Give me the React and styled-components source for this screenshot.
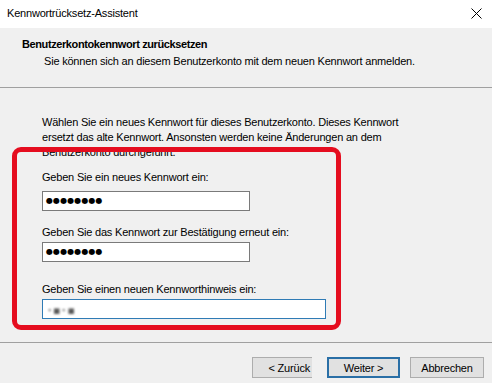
import styled, { createGlobalStyle } from 'styled-components';

const GlobalStyle = createGlobalStyle`
  html, body {
    margin: 0;
    padding: 0;
    background: #f0f0f0;
  }
  body {
    font-family: 'Liberation Sans', Arial, sans-serif;
    font-size: 11px;
    letter-spacing: -0.2px;
    color: #000;
  }
`;

const fields = [
  { label: 'Geben Sie ein neues Kennwort ein:', value: '●●●●●●●●', width: 208, top: 10, gap: 6 },
  { label: 'Geben Sie das Kennwort zur Bestätigung erneut ein:', value: '●●●●●●●●', width: 208, top: 14, gap: 2 },
  { label: 'Geben Sie einen neuen Kennworthinweis ein:', hint: true, width: 284, top: 20, gap: 2, focused: true },
];

const App = () => (
  <>
    <GlobalStyle />
    <Window>
      <TitleBar>
        <TitleText>Kennwortrücksetz-Assistent</TitleText>
        <CloseButton title='Schließen'>
          <svg width='11' height='11' viewBox='0 0 11 11'>
            <path d='M0.5 0.5 L10.5 10.5 M10.5 0.5 L0.5 10.5' stroke='#000' strokeWidth='1' fill='none' />
          </svg>
        </CloseButton>
      </TitleBar>
      <Header>
        <HeaderTitle>Benutzerkontokennwort zurücksetzen</HeaderTitle>
        <HeaderSubtitle>Sie können sich an diesem Benutzerkonto mit dem neuen Kennwort anmelden.</HeaderSubtitle>
      </Header>
      <Body>
        <Intro>
          Wählen Sie ein neues Kennwort für dieses Benutzerkonto. Dieses Kennwort<br />
          ersetzt das alte Kennwort. Ansonsten werden keine Änderungen an dem<br />
          Benutzerkonto durchgeführt.
        </Intro>
        {fields.map(f => (
          <Field key={f.label} top={f.top}>
            <FieldLabel gap={f.gap}>{f.label}</FieldLabel>
            <TextBox width={f.width} focused={f.focused}>
              {f.hint ? <BlurredHint>ꞏ▪ꞏ▪</BlurredHint> : <Dots>{f.value}</Dots>}
            </TextBox>
          </Field>
        ))}
        <Highlight />
      </Body>
      <Footer>
        <BackButton type='button'>&lt; Zurück</BackButton>
        <WizardButton type='button' primary>Weiter &gt;</WizardButton>
        <WizardButton type='button' spaced>Abbrechen</WizardButton>
      </Footer>
    </Window>
  </>
);

const Window = styled.div`
  width: 492px;
  height: 383px;
  display: flex;
  flex-direction: column;
  background: #f0f0f0;
  overflow: hidden;
`;

const TitleBar = styled.div`
  height: 28px;
  flex-shrink: 0;
  background: #fff;
  display: flex;
  align-items: center;
  justify-content: space-between;
  padding: 0 6px 2px 7px;
  box-sizing: border-box;
`;

const TitleText = styled.span`
  line-height: 15px;
`;

const CloseButton = styled.span`
  display: flex;
  align-items: center;
  justify-content: center;
  width: 20px;
  height: 20px;
`;

const Header = styled.div`
  height: 60px;
  flex-shrink: 0;
  box-sizing: border-box;
  padding: 9px 0 0 22px;
  border-bottom: 1px solid #a0a0a0;
`;

const HeaderTitle = styled.div`
  font-weight: bold;
  letter-spacing: -0.4px;
  line-height: 15px;
`;

const HeaderSubtitle = styled.div`
  margin: 2px 0 0 22px;
  line-height: 15px;
`;

const Body = styled.div`
  position: relative;
  flex: 1;
  padding: 27px 0 0 42px;
  box-sizing: border-box;
`;

const Intro = styled.p`
  margin: 0;
  line-height: 15px;
`;

const Field = styled.div`
  display: flex;
  flex-direction: column;
  margin-top: ${({ top }) => top}px;
`;

const FieldLabel = styled.label`
  line-height: 15px;
  margin-bottom: ${({ gap }) => gap}px;
`;

const TextBox = styled.div`
  width: ${({ width }) => width}px;
  height: 20px;
  box-sizing: border-box;
  background: #fff;
  border: 1px solid ${({ focused }) => (focused ? '#2f7bb5' : '#7a7a7a')};
  display: flex;
  align-items: center;
  padding-left: 3px;
  overflow: hidden;
`;

const Dots = styled.span`
  font-family: 'DejaVu Sans', sans-serif;
  font-size: 8px;
  letter-spacing: 0.1px;
  line-height: 1;
`;

const BlurredHint = styled.span`
  font-family: 'DejaVu Sans', sans-serif;
  font-size: 11px;
  color: #555;
  letter-spacing: 2px;
  filter: blur(0.8px);
  padding-left: 2px;
`;

const Highlight = styled.div`
  position: absolute;
  left: 12px;
  top: 59px;
  width: 329px;
  height: 183px;
  box-sizing: border-box;
  border: 5px solid #e50d1f;
  border-radius: 9px;
  pointer-events: none;
`;

const Footer = styled.div`
  height: 41px;
  flex-shrink: 0;
  box-sizing: border-box;
  border-top: 1px solid #a0a0a0;
  display: flex;
  justify-content: flex-end;
  align-items: flex-start;
  padding: 14px 8px 0 0;
`;

const WizardButton = styled.button`
  width: ${({ primary }) => (primary ? 73 : 74)}px;
  height: 21px;
  margin-left: ${({ spaced }) => (spaced ? 10 : 0)}px;
  box-sizing: border-box;
  background: #e1e1e1;
  border: ${({ primary }) => (primary ? '2px solid #2a6fa6' : '1px solid #adadad')};
  font-family: 'Liberation Sans', Arial, sans-serif;
  font-size: 11px;
  letter-spacing: -0.2px;
  color: #000;
  padding: 0;
`;

const BackButton = styled(WizardButton)`
  width: 60px;
  margin-right: 15px;
  border-right: none;
  text-align: right;
  padding-right: 2px;
`;

export default App;
